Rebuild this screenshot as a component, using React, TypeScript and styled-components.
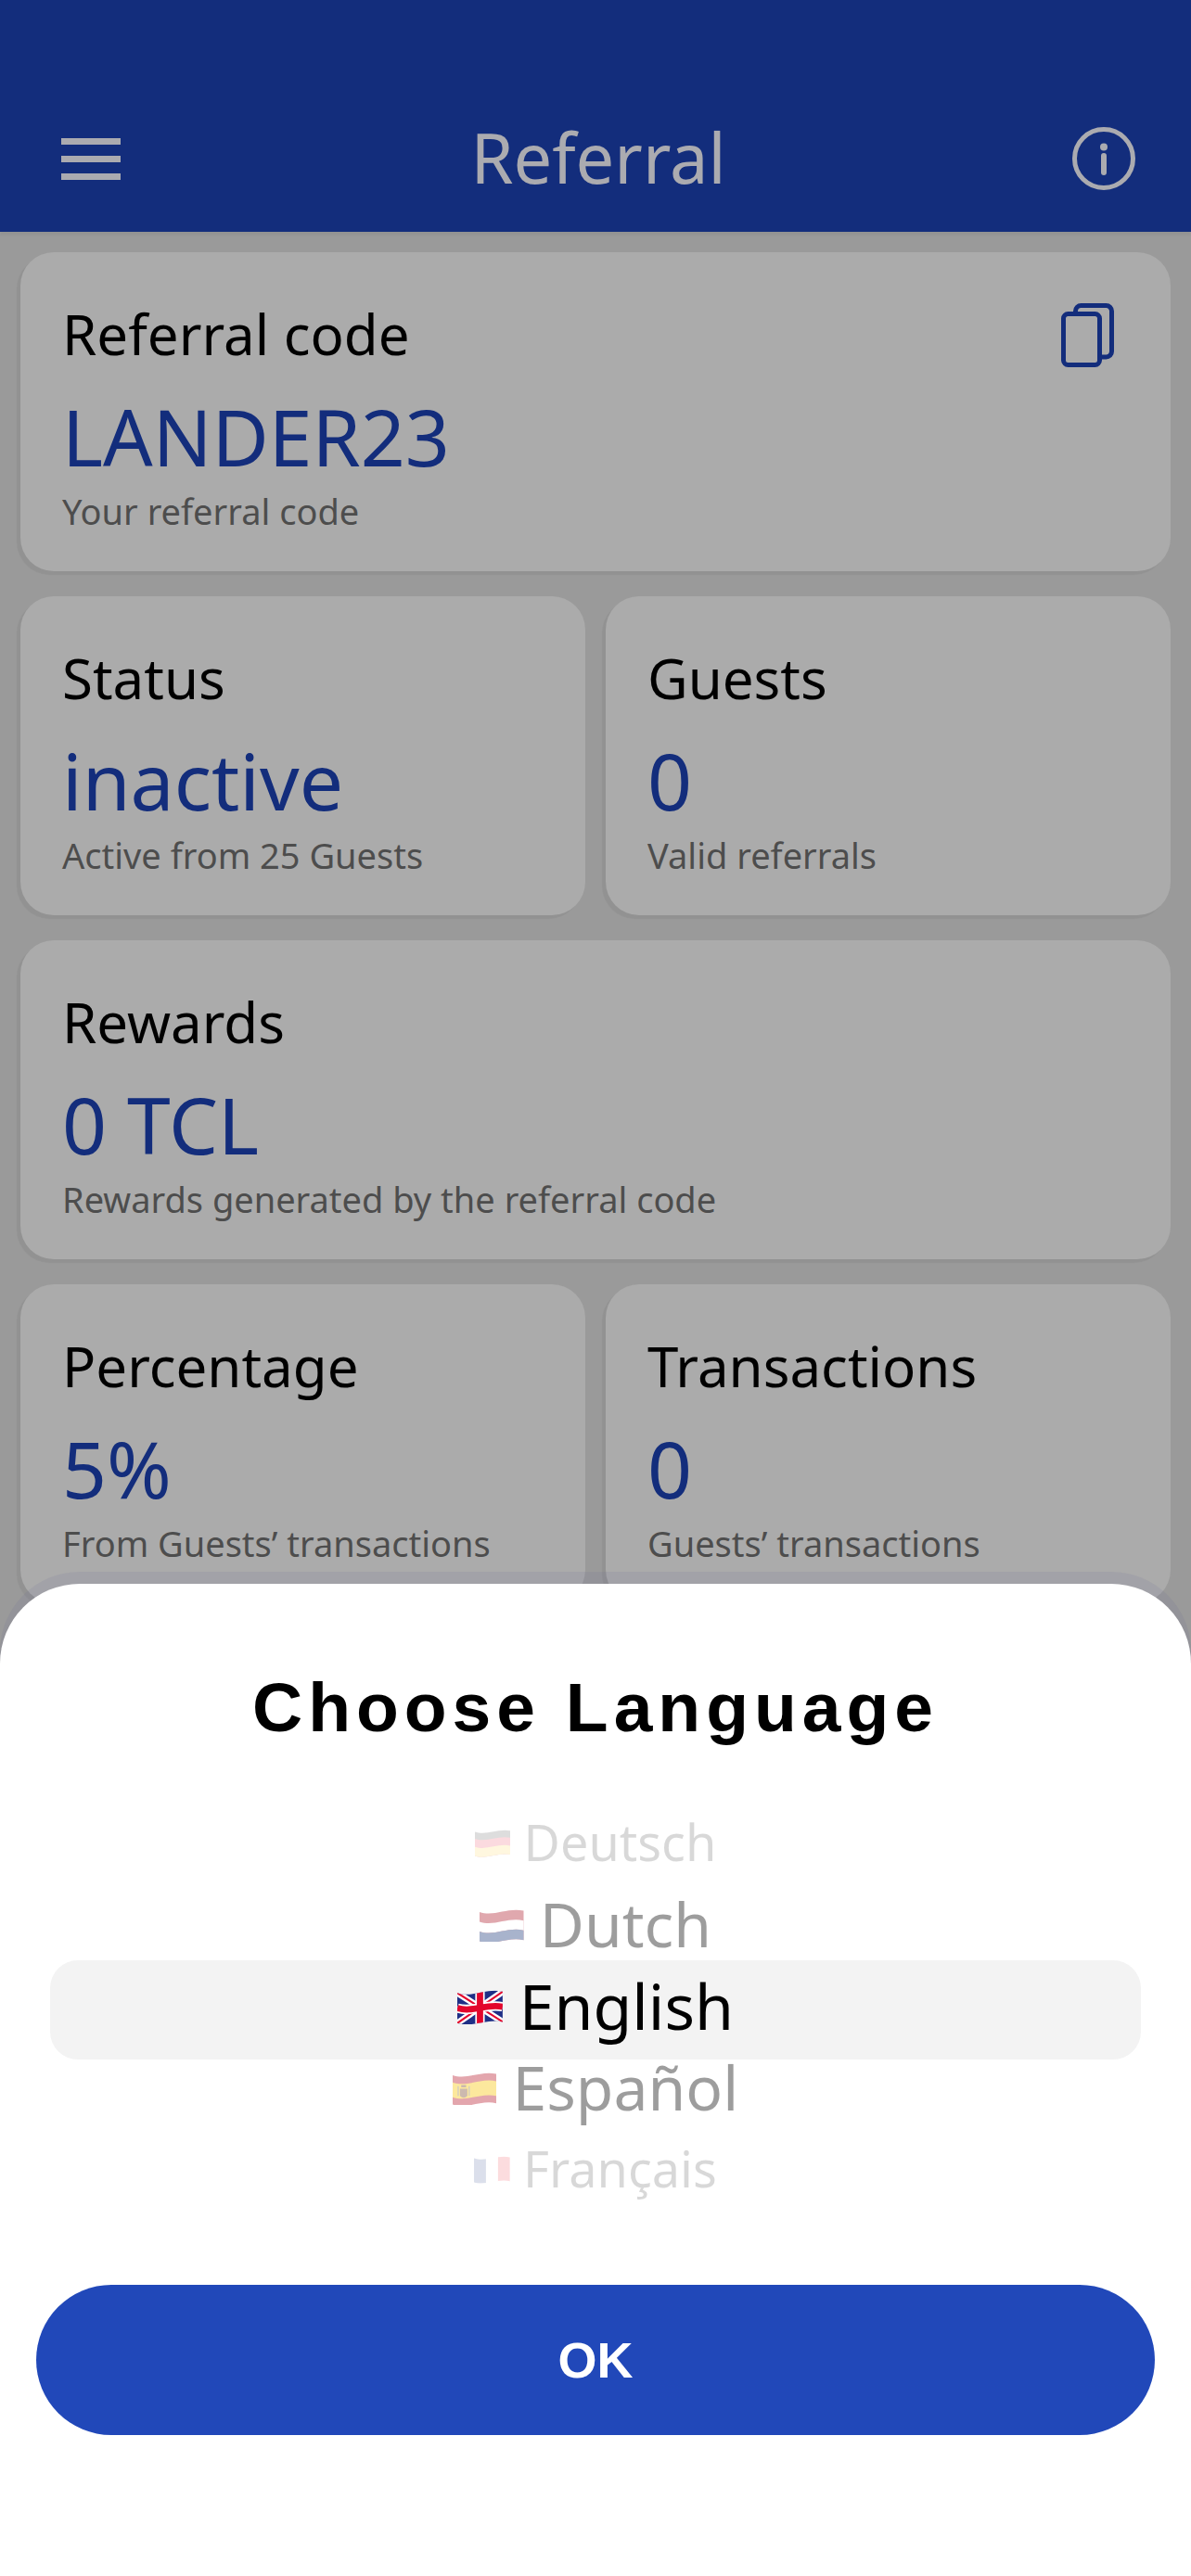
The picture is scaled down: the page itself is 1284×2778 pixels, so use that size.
import React, { useState } from "react";
import styled, { createGlobalStyle } from "styled-components";

const sans = `"Noto Sans", "Open Sans", sans-serif`;
const heading = `"Liberation Sans", Arial, sans-serif`;

const GlobalStyle = createGlobalStyle`
  * { box-sizing: border-box; }
  body { margin: 0; background: #9a9a9a; font-family: ${sans}; }
  h1, h2, h3, p { margin: 0; font-weight: 400; }
  button { font: inherit; border: 0; padding: 0; background: none; color: inherit; cursor: pointer; }
`;

const Page = styled.div`
  min-height: 100vh;
  background: #9a9a9a;
`;

const Header = styled.header`
  display: grid;
  grid-template-columns: 1fr auto 1fr;
  align-items: center;
  padding: 92px 60px 30px 66px;
  background: #132d7c;
  color: #ababb0;
  box-shadow: 0 4px 2px rgba(0, 0, 0, 0.04);
`;

const HeaderTitle = styled.h1`
  padding-top: 28px;
  font-size: 74px;
  line-height: 100px;
`;

const IconButton = styled.button<{ $end?: boolean }>`
  display: flex;
  justify-self: ${(p) => (p.$end ? "end" : "start")};
`;

const HeaderButton = styled(IconButton)`
  padding-top: 30px;
`;

const Cards = styled.main`
  display: grid;
  grid-template-columns: 1fr 1fr;
  gap: 27px 22px;
  padding: 22px;
`;

const Card = styled.section<{ $wide?: boolean }>`
  display: flex;
  justify-content: space-between;
  align-items: flex-start;
  grid-column: ${(p) => (p.$wide ? "1 / -1" : "auto")};
  padding: 48px 60px 40px 45px;
  border-radius: 36px;
  background: #ababab;
  box-shadow: -4px 4px 1px rgba(0, 0, 0, 0.05);
`;

const CardTitle = styled.h2`
  font-size: 60px;
  line-height: 80px;
  color: #000;
`;

const CardValue = styled.p`
  margin-top: 16px;
  font-size: 84px;
  line-height: 110px;
  color: #132d7c;
`;

const CardNote = styled.p`
  font-size: 38px;
  line-height: 50px;
  color: #4d4d4d;
  white-space: nowrap;
`;

const CopyButton = styled(IconButton)`
  padding-top: 7px;
  color: #132d7c;
`;

const Sheet = styled.form`
  position: fixed;
  left: 0;
  right: 0;
  bottom: 0;
  display: flex;
  flex-direction: column;
  padding: 88px 39px 152px;
  border-radius: 86px 86px 0 0;
  background: #fff;
  box-shadow: 0 -13px 0 rgba(92, 92, 150, 0.1);
`;

const SheetTitle = styled.h2`
  && { font-weight: 700; }
  font-family: ${heading};
  font-size: 75px;
  line-height: 90px;
  letter-spacing: 6px;
  text-align: center;
`;

const Wheel = styled.fieldset`
  position: relative;
  margin: 56px 0 82px;
  padding: 0;
  border: 0;
`;

const WheelBand = styled.div`
  position: absolute;
  top: 172px;
  left: 15px;
  right: 15px;
  height: 107px;
  border-radius: 30px;
  background: #f3f3f3;
`;

const sizes = [68, 66, 54];
const fades = [1, 0.38, 0.15];

const Option = styled.label<{ $distance: number }>`
  position: relative;
  display: flex;
  justify-content: center;
  align-items: center;
  gap: 0.26em;
  height: 88px;
  font-size: ${(p) => sizes[p.$distance]}px;
  opacity: ${(p) => fades[p.$distance]};
  cursor: pointer;
`;

const HiddenRadio = styled.input`
  position: absolute;
  opacity: 0;
  pointer-events: none;
`;

const FlagSvg = styled.svg`
  width: 0.72em;
  height: 0.62em;
`;

const OkButton = styled.button`
  && {
    height: 162px;
    border-radius: 81px;
    background: #2148b9;
    color: #fff;
    font-family: ${heading};
    font-size: 54px;
    font-weight: 700;
  }
`;

/* A horizontal band with the waving edge that all flags share. */
const band = (y0: number, y1: number) =>
  `M0 ${y0 + 1}C12 ${y0 + 5} 23 ${y0 - 3} 36 ${y0}V${y1}C23 ${y1 - 3} 12 ${y1 + 5} 0 ${y1 + 1}Z`;

type Code = "de" | "nl" | "gb" | "es" | "fr";

const Flag = ({ code }: { code: Code }) => {
  const clip = `wave-${code}`;
  return (
    <FlagSvg viewBox="0 0 36 31" aria-hidden="true">
      <clipPath id={clip}>
        <path d={band(5, 29)} />
      </clipPath>
      {code === "de" && (
        <>
          <path d={band(5, 29)} fill="#222" />
          <path d={band(12, 29)} fill="#e8112d" />
          <path d={band(20, 29)} fill="#fc3" />
        </>
      )}
      {code === "nl" && (
        <>
          <path d={band(5, 29)} fill="#b01c2e" />
          <path d={band(13, 21)} fill="#fff" />
          <path d={band(21, 29)} fill="#1e3b7c" />
        </>
      )}
      {code === "es" && (
        <>
          <path d={band(5, 29)} fill="#b8182b" />
          <path d={band(11, 23)} fill="#f8c300" />
          <path d="M6 17h6v6q-3 3-6 0zM7 14h4v2H7z" fill="#7a4a30" />
          <path d="M4.500 15v8M13.500 15v8" stroke="#8a7a60" strokeWidth="1" />
        </>
      )}
      {code === "fr" && (
        <g clipPath={`url(#${clip})`}>
          <path d="M0 0h12v31H0z" fill="#17307c" />
          <path d="M12 0h12v31H12z" fill="#fff" />
          <path d="M24 0h12v31H24z" fill="#f01c2c" />
        </g>
      )}
      {code === "gb" && (
        <g clipPath={`url(#${clip})`}>
          <path d="M0 0h36v31H0z" fill="#1f2f86" />
          <path d="M0 6L36 29M0 30L36 5" stroke="#fff" strokeWidth="5" />
          <path d="M0 6L36 29M0 30L36 5" stroke="#e3062c" strokeWidth="1.600" />
          <path d="M18 0v31M0 18C12 22 23 14 36 17" stroke="#fff" strokeWidth="7.500" fill="none" />
          <path d="M18 0v31M0 18C12 22 23 14 36 17" stroke="#e3062c" strokeWidth="5" fill="none" />
        </g>
      )}
    </FlagSvg>
  );
};

const MenuIcon = () => (
  <svg width="64" height="45" viewBox="0 0 64 45" fill="currentColor" aria-hidden="true">
    <path d="M0 0h64v7H0zM0 19h64v7H0zM0 38h64v7H0z" />
  </svg>
);

const InfoIcon = () => (
  <svg width="68" height="68" viewBox="0 0 68 68" fill="none" stroke="currentColor" aria-hidden="true">
    <circle cx="34" cy="34" r="31.500" strokeWidth="5" />
    <path d="M34 31v18" strokeWidth="6" strokeLinecap="round" />
    <circle cx="34" cy="21.500" r="4" fill="currentColor" stroke="none" />
  </svg>
);

const CopyIcon = () => (
  <svg width="58" height="70" viewBox="0 0 58 70" fill="none" stroke="currentColor" strokeWidth="5" aria-hidden="true">
    <rect x="2.500" y="11.500" width="39" height="55" rx="5" />
    <path d="M15.500 11V8.500a6 6 0 0 1 6-6H48.500a6 6 0 0 1 6 6V52a6 6 0 0 1-6 6H42" />
  </svg>
);

const stats = [
  { title: "Referral code", value: "LANDER23", note: "Your referral code", wide: true, copy: true },
  { title: "Status", value: "inactive", note: "Active from 25 Guests" },
  { title: "Guests", value: "0", note: "Valid referrals" },
  { title: "Rewards", value: "0 TCL", note: "Rewards generated by the referral code", wide: true },
  { title: "Percentage", value: "5%", note: "From Guests’ transactions" },
  { title: "Transactions", value: "0", note: "Guests’ transactions" },
];

const languages: { code: Code; name: string }[] = [
  { code: "de", name: "Deutsch" },
  { code: "nl", name: "Dutch" },
  { code: "gb", name: "English" },
  { code: "es", name: "Español" },
  { code: "fr", name: "Français" },
];

export default function App() {
  const [order, setOrder] = useState(languages);

  /* Turns the wheel until the picked language is in the middle. */
  const pick = (index: number) =>
    setOrder(order.map((_, i) => order[(i + index - 2 + order.length) % order.length]));

  return (
    <Page>
      <GlobalStyle />
      <Header>
        <HeaderButton type="button" aria-label="Menu">
          <MenuIcon />
        </HeaderButton>
        <HeaderTitle>Referral</HeaderTitle>
        <HeaderButton type="button" aria-label="Information" $end>
          <InfoIcon />
        </HeaderButton>
      </Header>
      <Cards>
        {stats.map((s) => (
          <Card key={s.title} $wide={s.wide}>
            <div>
              <CardTitle>{s.title}</CardTitle>
              <CardValue>{s.value}</CardValue>
              <CardNote>{s.note}</CardNote>
            </div>
            {s.copy && (
              <CopyButton type="button" aria-label="Copy referral code">
                <CopyIcon />
              </CopyButton>
            )}
          </Card>
        ))}
      </Cards>
      <Sheet onSubmit={(e) => e.preventDefault()}>
        <SheetTitle id="language-title">Choose Language</SheetTitle>
        <Wheel aria-labelledby="language-title">
          <WheelBand />
          {order.map((l, i) => (
            <Option key={l.code} $distance={Math.abs(i - 2)}>
              <HiddenRadio type="radio" name="language" value={l.code} checked={i === 2} onChange={() => pick(i)} />
              <Flag code={l.code} />
              {l.name}
            </Option>
          ))}
        </Wheel>
        <OkButton type="submit">OK</OkButton>
      </Sheet>
    </Page>
  );
}
